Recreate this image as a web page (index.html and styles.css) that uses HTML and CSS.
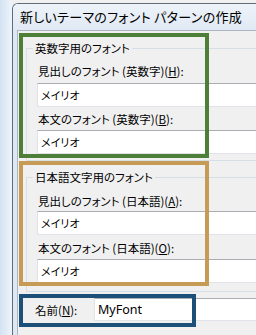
FILE: index.html
```html
<!DOCTYPE html>
<html lang="ja">
<head>
    <meta charset="UTF-8">
    <meta name="viewport" content="width=device-width, initial-scale=1.0">
    <title>新しいテーマのフォント パターンの作成</title>
    <link rel="stylesheet" href="styles.css">
</head>
<body>
    <div class="screen">
        <div class="desk"></div>
        <div class="window">
            <div class="titlebar">
                <span class="title">新しいテーマのフォント パターンの作成</span>
            </div>
            <div class="frame">
                <div class="client">
                    <fieldset class="group group-latin">
                        <legend>英数字用のフォント</legend>
                        <label class="field-label label-first">見出しのフォント (英数字)(<u>H</u>):</label>
                        <div class="textbox tb-first">メイリオ</div>
                        <label class="field-label label-second">本文のフォント (英数字)(<u>B</u>):</label>
                        <div class="textbox tb-second">メイリオ</div>
                    </fieldset>

                    <fieldset class="group group-jp">
                        <legend>日本語文字用のフォント</legend>
                        <label class="field-label label-first">見出しのフォント (日本語)(<u>A</u>):</label>
                        <div class="textbox tb-first">メイリオ</div>
                        <label class="field-label label-second">本文のフォント (日本語)(<u>O</u>):</label>
                        <div class="textbox tb-second">メイリオ</div>
                    </fieldset>

                    <div class="name-row">
                        <label class="name-label">名前(<u>N</u>):</label>
                        <div class="textbox name-box">MyFont</div>
                    </div>
                </div>
            </div>
        </div>

        <!-- annotation frames drawn over the dialog -->
        <div class="mark mark-green"></div>
        <div class="mark mark-orange"></div>
        <div class="mark mark-blue"></div>
    </div>
</body>
</html>
```

FILE: styles.css
```css
html, body {
    margin: 0;
    padding: 0;
}

body {
    width: 256px;
    height: 335px;
    overflow: hidden;
    background-color: #f0f0f0;
    font-family: "Noto Sans CJK JP", "Noto Sans", sans-serif;
    font-feature-settings: "palt";
    color: #000;
}

.screen {
    position: relative;
    display: flex;
    width: 256px;
    height: 335px;
    overflow: hidden;
}

/* desktop strip left of the window */
.desk {
    flex: 0 0 12px;
    background: linear-gradient(to right, #d3e2f2, #eef4fb);
}

.window {
    flex: 0 0 320px;
    margin-top: 3px;
    border-left: 1px solid #5f6b78;
    border-top: 1px solid #5f6b78;
    border-top-left-radius: 6px;
    background-color: #dfe9f5;
    display: flex;
    flex-direction: column;
}

.titlebar {
    height: 26px;
    display: flex;
    align-items: center;
    padding-left: 7px;
    background: linear-gradient(#eef3f9, #e0e9f4);
    border-top-left-radius: 5px;
}

.title {
    font-size: 13px;
    line-height: 14px;
    white-space: nowrap;
    letter-spacing: 0.3px;
}

.frame {
    flex: 1;
    display: flex;
    padding-left: 4px;
    background-color: #dde8f4;
}

.client {
    flex: 1;
    background-color: #f0f0f0;
    border-left: 1px solid #a9b6c4;
    border-top: 1px solid #a9b6c4;
    padding: 11px 0 0 8px;
}

.group {
    margin: 0;
    padding: 0 0 0 10px;
    border: 1px solid #d5dfe5;
    border-right: none;
    min-width: 0;
}

.group legend {
    margin-left: -4px;
    padding: 0 2px;
    font-size: 11.5px;
    line-height: 12px;
    white-space: nowrap;
}

.group-latin {
    padding-bottom: 6px;
    margin-bottom: 10px;
}

.group-jp {
    padding-bottom: 8px;
    margin-bottom: 6px;
}

.field-label {
    display: block;
    margin-left: 1px;
    font-size: 11.5px;
    line-height: 12px;
    white-space: nowrap;
}

.group-latin .label-first { margin-top: 11px; }
.group-latin .tb-first { margin-top: 6px; }
.group-latin .label-second { margin-top: 6px; }
.group-latin .tb-second { margin-top: 5px; }

.group-jp .label-first { margin-top: 12px; }
.group-jp .tb-first { margin-top: 4px; }
.group-jp .label-second { margin-top: 7px; }
.group-jp .tb-second { margin-top: 5px; }

.textbox {
    height: 22px;
    display: flex;
    align-items: center;
    padding-left: 3px;
    background-color: #fff;
    border: 1px solid #e2e3ea;
    border-top-color: #abadb3;
    border-right: none;
    font-size: 11px;
    white-space: nowrap;
}

.name-row {
    display: flex;
    align-items: center;
    padding-left: 9px;
}

.name-label {
    flex: 0 0 59px;
    font-size: 11.5px;
    line-height: 12px;
    white-space: nowrap;
}

.name-box {
    flex: 1;
    height: 21px;
    font-family: "Noto Sans", sans-serif;
    font-size: 12.5px;
}

/* coloured annotation frames */
.mark {
    position: absolute;
    left: 19px;
    box-sizing: border-box;
    border: 4px solid;
}

.mark-green {
    top: 33px;
    width: 190px;
    height: 125px;
    border-color: #4e7f39;
}

.mark-orange {
    top: 161px;
    width: 190px;
    height: 125px;
    border-color: #c69b55;
}

.mark-blue {
    top: 294px;
    width: 177px;
    height: 33px;
    border-color: #1d5078;
}
```
